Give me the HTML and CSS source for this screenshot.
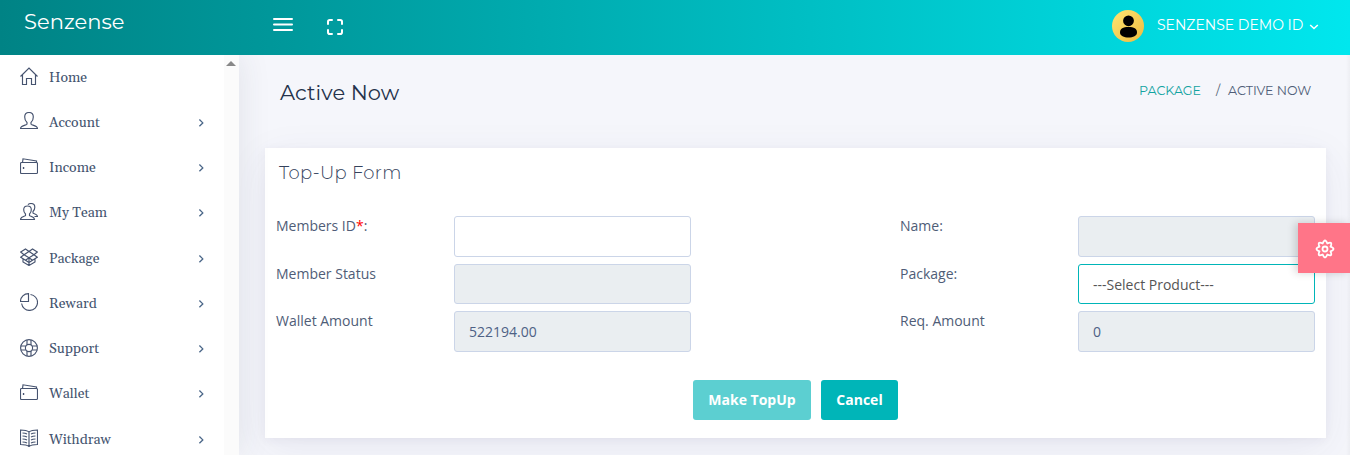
FILE: index.html
```html
<!DOCTYPE html>
<html lang="en">
<head>
<meta charset="utf-8">
<title>Senzense - Active Now</title>
<link rel="stylesheet" href="styles.css">
</head>
<body>
<svg class="defs" width="0" height="0">
  <defs>
    <symbol id="home" viewBox="0 0 18 18"><path d="M.5 9.500 9 1l8.500 8.500M2.500 8v9.500h4v-6h5v6h4V8"/></symbol>
    <symbol id="user" viewBox="0 0 18 18"><path d="M9 .5C6.300 .5 4.700 2.500 4.700 5c0 2.300.9 4.400 2.300 5.500v1.700c-.3 1-6.500 1.300-6.500 4.300h17c0-3-6.200-3.300-6.500-4.300v-1.700c1.400-1.100 2.300-3.200 2.300-5.500C13.300 2.500 11.700.5 9 .5z"/></symbol>
    <symbol id="wallet" viewBox="0 0 18 18"><path d="M1.500 4.500h15q1 0 1 1v9q0 1-1 1h-15q-1 0-1-1v-9q0-1 1-1zM2.500 4.500 3 .8l13.500 2.200v1.500M3.500 9v2M2.800 10h1.600"/></symbol>
    <symbol id="team" viewBox="0 0 18 18"><path d="M7.500 3C5 3 3.700 4.600 3.700 6.800c0 1.800.7 3.200 1.800 4.200v1.500c-.3.900-5 1-5 4h14c0-3-4.700-3.100-5-4V11c1.100-1 1.800-2.400 1.800-4.200C11.300 4.600 10 3 7.500 3zM8 1.800C8.600.9 9.600.5 11 .5c2.500 0 3.800 1.600 3.800 3.800 0 1.800-.7 3.200-1.800 4.200V10c.3.900 4.500 1 4.500 3.500h-3"/></symbol>
    <symbol id="box" viewBox="0 0 18 18"><path d="M5.500 1 9 3.500l-5 3.200L.7 4zM12.500 1 9 3.500l5 3.200L17.300 4zM4 6.700.7 9.300l4.800 3L9 9.700zM14 6.700l3.300 2.600-4.800 3L9 9.700zM4 6.700l5-3.200 5 3.200-5 3zM3 11v3l6 3.500 6-3.500v-3M9 9.700v7.800M5.500 12.300 9 14.500l3.500-2.200"/></symbol>
    <symbol id="pie" viewBox="0 0 18 18"><path d="M8.500.6v7.900H.5C.5 4 4 .6 8.500.6zM10.500 1.500A8 8 0 1 1 1.600 10.500"/></symbol>
    <symbol id="support" viewBox="0 0 18 18"><circle cx="9" cy="9" r="8.400"/><circle cx="9" cy="9" r="3.600"/><path d="M7 .8v5.100M11 .8v5.100M7 12.100v5.100M11 12.100v5.100M.8 7h5.100M.8 11h5.100M12.100 7h5.100M12.100 11h5.100"/></symbol>
    <symbol id="book" viewBox="0 0 18 18"><path d="M9 3C7 1.400 3.500 1 .5 1v14.500c3 0 6.500.4 8.500 2 2-1.600 5.500-2 8.500-2V1c-3 0-6.500.4-8.500 2zM9 3v14.500M2.500 4c2 0 3.500.4 4.500 1M2.500 7c2 0 3.500.4 4.500 1M2.500 10c2 0 3.500.4 4.500 1M2.500 13c2 0 3.500.4 4.500 1M15.500 4c-2 0-3.500.4-4.500 1M15.500 7c-2 0-3.500.4-4.500 1M15.500 10c-2 0-3.500.4-4.500 1M15.500 13c-2 0-3.500.4-4.500 1"/></symbol>
    <symbol id="chev" viewBox="0 0 6 10"><path d="M1.400 1.500 4.800 4.900 1.400 8.300"/></symbol>
  </defs>
</svg>

<header class="topbar">
  <a class="brand">Senzense</a>
  <svg class="burger" viewBox="0 0 20 16"><path d="M1 2h18M1 7.500h18M1 13h18"/></svg>
  <svg class="expand" viewBox="0 0 16 16"><path d="M1 5V2.800Q1 1 2.800 1H5M11 1h2.200Q15 1 15 2.800V5M15 11v2.200q0 1.800-1.800 1.800H11M5 15H2.800Q1 15 1 13.200V11"/></svg>
  <div class="account">
    <svg class="avatar" viewBox="0 0 32 32">
      <defs><linearGradient id="gold" x1="0" y1="0" x2="1" y2="1"><stop offset="0" stop-color="#ffe672"/><stop offset="1" stop-color="#edbb40"/></linearGradient></defs>
      <circle cx="16" cy="16" r="16" fill="url(#gold)"/>
      <circle cx="16.500" cy="10.800" r="5.400"/>
      <path d="M8 22.500C8 18.500 11 17 16.500 17S25 18.500 25 22.500c0 3.300-4 5-8.500 5S8 25.800 8 22.500z"/>
    </svg>
    <span class="account-name">SENZENSE DEMO ID</span>
    <svg class="caret" viewBox="0 0 10 6"><path d="M1.200 1 5 4.500 8.800 1"/></svg>
  </div>
</header>

<div class="layout">
  <aside class="sidebar">
    <nav class="menu">
      <a class="item"><svg class="ico"><use href="#home"/></svg><span>Home</span></a>
      <a class="item"><svg class="ico"><use href="#user"/></svg><span>Account</span><svg class="chev"><use href="#chev"/></svg></a>
      <a class="item"><svg class="ico"><use href="#wallet"/></svg><span>Income</span><svg class="chev"><use href="#chev"/></svg></a>
      <a class="item"><svg class="ico"><use href="#team"/></svg><span>My Team</span><svg class="chev"><use href="#chev"/></svg></a>
      <a class="item"><svg class="ico"><use href="#box"/></svg><span>Package</span><svg class="chev"><use href="#chev"/></svg></a>
      <a class="item"><svg class="ico"><use href="#pie"/></svg><span>Reward</span><svg class="chev"><use href="#chev"/></svg></a>
      <a class="item"><svg class="ico"><use href="#support"/></svg><span>Support</span><svg class="chev"><use href="#chev"/></svg></a>
      <a class="item"><svg class="ico"><use href="#wallet"/></svg><span>Wallet</span><svg class="chev"><use href="#chev"/></svg></a>
      <a class="item"><svg class="ico"><use href="#book"/></svg><span>Withdraw</span><svg class="chev"><use href="#chev"/></svg></a>
    </nav>
    <div class="track"><i class="track-up"></i></div>
  </aside>

  <main class="content">
    <div class="page-head">
      <h3 class="page-title">Active Now</h3>
      <div class="crumbs"><a class="crumb-link">PACKAGE</a><span class="slash">/</span><span class="crumb">ACTIVE NOW</span></div>
    </div>
    <section class="card">
      <h4 class="card-title">Top-Up Form</h4>
      <form class="form">
        <label class="label">Members ID<span class="req">*</span>:</label><div class="field"></div>
        <label class="label">Name:</label><div class="field disabled"></div>
        <label class="label">Member Status</label><div class="field disabled"></div>
        <label class="label">Package:</label><div class="field select">---Select Product---</div>
        <label class="label">Wallet Amount</label><div class="field disabled">522194.00</div>
        <label class="label">Req. Amount</label><div class="field disabled">0</div>
      </form>
      <div class="actions"><button class="btn primary">Make TopUp</button><button class="btn">Cancel</button></div>
    </section>
  </main>
</div>

<a class="customizer"><svg class="gear" viewBox="0 0 20 20"><path d="M15.500 7.700Q21.500 10 15.500 12.300 18.100 18.100 12.300 15.500 10 21.500 7.700 15.500 1.900 18.100 4.500 12.300-1.500 10 4.500 7.700 1.900 1.900 7.700 4.500 10-1.500 12.300 4.500 18.100 1.900 15.500 7.700Z"/><circle cx="10" cy="10" r="2.500"/></svg></a>
</body>
</html>
```
FILE: styles.css
```css
* { box-sizing: border-box; }
body {
  margin: 0;
  height: 455px;
  overflow: hidden;
  background: #f5f6fb;
  color: #4f5d77;
  font-family: "Open Sans", sans-serif;
  font-size: 14px;
}
svg { fill: none; flex: none; }
.defs { position: absolute; }

.topbar {
  position: relative;
  z-index: 3;
  display: flex;
  height: 55px;
  background: linear-gradient(to right, #008385, #00e7ee);
  color: #fff;
  font-family: Montserrat, Inter, sans-serif;
}
.brand { width: 249px; padding: 8px 0 0 24px; font-size: 21px; line-height: 28px; letter-spacing: .05px; }
.burger { width: 20px; height: 16px; margin: 17px 0 0 24px; stroke: #fff; stroke-width: 2; stroke-linecap: round; }
.expand { width: 16px; height: 16px; margin: 19px 0 0 34px; stroke: #fff; stroke-width: 2; stroke-linecap: round; }
.account { display: flex; margin-left: auto; padding: 10px 31px 0 0; }
.avatar { width: 32px; height: 32px; fill: #000; }
.account-name { width: 151px; margin-left: 13px; line-height: 31px; font-size: 14px; white-space: nowrap; }
.caret { width: 10px; height: 6px; margin: 14px 0 0 1px; stroke: #fff; stroke-width: 1.600; }

.layout { display: flex; height: 400px; }
.sidebar {
  z-index: 1;
  display: flex;
  width: 239px;
  flex: none;
  background: #fff;
  box-shadow: 1px 0 30px rgba(50, 55, 80, .1);
}
.menu { width: 224px; height: 400px; overflow: hidden; }
.item {
  display: flex;
  align-items: center;
  height: 45.270px;
  padding: 0 20px;
  color: #44546f;
  font-family: Georgia, Gelasio, "Noto Serif", "DejaVu Serif", serif;
  font-size: 14px;
}
.item span { margin: 0 0 0 11px; }
.ico { width: 18px; height: 18px; margin-top: -3px; stroke: #46536f; stroke-width: 1.150; }
.chev { width: 6px; height: 10px; margin-left: auto; stroke: #4a6688; stroke-width: 1.300; }
.track { width: 15px; background: #fbfbfb; }
.track-up { display: block; width: 0; height: 0; margin: 6px 0 0 2px; border: 5px solid transparent; border-top: 0; border-bottom-color: #888; }

.content { flex: 1; padding: 0 24px 0 26px; background: linear-gradient(to left, rgba(0, 0, 0, .03), transparent 4px); }
.page-head { display: flex; justify-content: space-between; height: 93px; padding: 23px 15px 0; font-family: Montserrat, Inter, sans-serif; }
.page-title { margin: 0; font-size: 21px; line-height: 30px; font-weight: 400; letter-spacing: .05px; color: #24324b; }
.crumbs { display: flex; margin-top: 3px; line-height: 20px; font-size: 12.600px; }
.crumb-link { color: #12a3a1; width: 77px; }
.slash { width: 12px; }
.crumb { width: 83px; white-space: nowrap; }
.card {
  height: 290px;
  background: #fff;
  box-shadow: 0 10px 40px rgba(62, 57, 107, .07), 0 2px 9px rgba(62, 57, 107, .06);
}
.card-title { margin: 0; height: 68px; padding: 12px 14px; font-family: Montserrat, Inter, sans-serif; font-size: 18px; line-height: 26px; font-weight: 350; letter-spacing: .35px; color: #34425c; }
.form { display: grid; grid-template-columns: 178px 446px 178px 237px; grid-auto-rows: 40.500px; row-gap: 7px; padding-left: 11px; }
.label { line-height: 20px; }
.req { color: #f00; }
.field { width: 237px; padding: 0 14px; border: 1px solid #cbd5e8; border-radius: 3px; background: #fff; line-height: 39px; color: #4e6185; }
.disabled { background: #eaeef1; }
.select { border-color: #00b5b8; color: #555; }
.actions { display: flex; justify-content: center; gap: 10px; padding-top: 28px; }
.btn { height: 40px; padding: 0; width: 77px; border: 0; border-radius: 3px; background: #00b5b8; color: #fff; font: 700 14px "Open Sans", sans-serif; }
.primary { width: 118px; background: #5ccfd1; }

.customizer {
  position: absolute;
  top: 223px;
  right: 0;
  z-index: 4;
  display: grid;
  place-items: center;
  width: 52px;
  height: 50px;
  background: #ff7588;
  box-shadow: -3px 0 8px rgba(0, 0, 0, .16);
}
.gear { width: 20px; height: 20px; margin: 2px 0 0 1px; stroke: #fff; stroke-width: 1.800; stroke-linejoin: round; }
```
